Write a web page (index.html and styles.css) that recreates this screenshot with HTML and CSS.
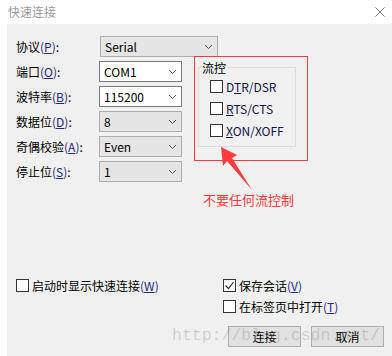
FILE: index.html
```html
<!DOCTYPE html>
<html lang="zh-CN">
<head>
    <meta charset="UTF-8">
    <meta name="viewport" content="width=device-width, initial-scale=1.0">
    <title>快速连接</title>
    <link rel="stylesheet" href="styles.css">
</head>
<body>
    <div class="window">
        <div class="titlebar">
            <span class="title">快速连接</span>
            <svg class="close" width="10" height="10" viewBox="0 0 10 10">
                <path d="M0.5 0.5 L9.5 9.5 M9.5 0.5 L0.5 9.5" stroke="#777" stroke-width="1" fill="none"/>
            </svg>
        </div>

        <div class="client">
            <div class="row">
                <span class="label">协议<span class="key">(<u>P</u>)</span>:</span>
                <div class="combo combo-wide is-locked">
                    <span>Serial</span>
                    <svg width="7" height="4" viewBox="0 0 7 4"><path d="M0 0 L3.5 3.5 L7 0" stroke="#555" fill="none"/></svg>
                </div>
            </div>

            <div class="settings">
                <div class="fields">
                    <div class="row">
                        <span class="label">端口<span class="key">(<u>O</u>)</span>:</span>
                        <div class="combo">
                            <span>COM1</span>
                            <svg width="7" height="4" viewBox="0 0 7 4"><path d="M0 0 L3.5 3.5 L7 0" stroke="#555" fill="none"/></svg>
                        </div>
                    </div>
                    <div class="row">
                        <span class="label">波特率<span class="key">(<u>B</u>)</span>:</span>
                        <div class="combo">
                            <span>115200</span>
                            <svg width="7" height="4" viewBox="0 0 7 4"><path d="M0 0 L3.5 3.5 L7 0" stroke="#555" fill="none"/></svg>
                        </div>
                    </div>
                    <div class="row">
                        <span class="label">数据位<span class="key">(<u>D</u>)</span>:</span>
                        <div class="combo is-locked">
                            <span>8</span>
                            <svg width="7" height="4" viewBox="0 0 7 4"><path d="M0 0 L3.5 3.5 L7 0" stroke="#555" fill="none"/></svg>
                        </div>
                    </div>
                    <div class="row">
                        <span class="label">奇偶校验<span class="key">(<u>A</u>)</span>:</span>
                        <div class="combo is-locked">
                            <span>Even</span>
                            <svg width="7" height="4" viewBox="0 0 7 4"><path d="M0 0 L3.5 3.5 L7 0" stroke="#555" fill="none"/></svg>
                        </div>
                    </div>
                    <div class="row">
                        <span class="label">停止位<span class="key">(<u>S</u>)</span>:</span>
                        <div class="combo is-locked">
                            <span>1</span>
                            <svg width="7" height="4" viewBox="0 0 7 4"><path d="M0 0 L3.5 3.5 L7 0" stroke="#555" fill="none"/></svg>
                        </div>
                    </div>
                </div>

                <fieldset class="flow">
                    <legend>流控</legend>
                    <div class="check"><span class="box"></span><span class="check-text">D<u>T</u>R/DSR</span></div>
                    <div class="check"><span class="box"></span><span class="check-text"><u>R</u>TS/CTS</span></div>
                    <div class="check"><span class="box"></span><span class="check-text"><u>X</u>ON/XOFF</span></div>
                </fieldset>
            </div>

            <div class="footer">
                <div class="check check-tall">
                    <span class="box"></span>
                    <span>启动时显示快速连接<span class="key">(<u>W</u>)</span></span>
                </div>
                <div class="footer-opts">
                    <div class="check check-tall">
                        <span class="box">
                            <svg width="11" height="11" viewBox="0 0 11 11"><path d="M1.5 5.5 L4.5 8.5 L9.5 2" stroke="#333" stroke-width="1.2" fill="none"/></svg>
                        </span>
                        <span>保存会话<span class="key">(<u>V</u>)</span></span>
                    </div>
                    <div class="check check-tall">
                        <span class="box"></span>
                        <span>在标签页中打开<span class="key">(<u>T</u>)</span></span>
                    </div>
                </div>
            </div>

            <div class="actions">
                <button>连接</button>
                <button>取消</button>
            </div>

            <!-- annotation drawn on top of the screenshot -->
            <div class="mark-box"></div>
            <svg class="mark-arrow" width="40" height="50" viewBox="0 0 40 50">
                <polygon points="2,3 18,11 13,14 33,46 8,17 4,22" fill="#ff3b3b"/>
            </svg>
            <div class="mark-text">不要任何流控制</div>
            <div class="watermark">http://blog.csdn.net/</div>
        </div>
    </div>
</body>
</html>
```

FILE: styles.css
```css
body {
    margin: 0;
    background-color: #fff;
    font-family: "Noto Sans CJK SC", "Microsoft YaHei", sans-serif;
    font-size: 12px;
    color: #000;
}
.window {
    width: 392px;
    height: 356px;
    display: flex;
    flex-direction: column;
    overflow: hidden;
}
.titlebar {
    height: 24px;
    flex-shrink: 0;
    display: flex;
    align-items: center;
    justify-content: space-between;
    padding: 0 7px 0 8px;
    background-color: #fff;
}
.title {
    color: #9a9a9a;
    line-height: 14px;
}
.client {
    flex: 1;
    margin-left: 7px;
    padding: 12px 8px 9px 9px;
    background-color: #f0f0f0;
    display: flex;
    flex-direction: column;
    position: relative;
}
.row {
    display: flex;
    align-items: center;
    height: 21px;
}
.label {
    width: 83px;
    flex-shrink: 0;
    line-height: 16px;
}
.key {
    color: #25257a;
}
.combo {
    box-sizing: border-box;
    width: 83px;
    height: 21px;
    display: flex;
    align-items: center;
    justify-content: space-between;
    padding: 0 5px 0 4px;
    background-color: #fff;
    border: 1px solid #7a7a7a;
    line-height: 16px;
}
.combo.is-locked {
    background-color: #e5e5e5;
    border-color: #adadad;
}
.combo-wide {
    width: 118px;
    margin-left: 1px;
}
.settings {
    display: flex;
    align-items: flex-start;
    margin-top: 4px;
}
.fields {
    display: flex;
    flex-direction: column;
    gap: 4px;
}
.flow {
    box-sizing: border-box;
    width: 98px;
    margin: 0 0 0 16px;
    padding: 6px 0 9px 2px;
    border: 1px solid #dcdcdc;
    display: flex;
    flex-direction: column;
    gap: 9px;
    min-width: 0;
}
.flow legend {
    padding: 0 1px;
    line-height: 13px;
}
.flow .check {
    margin-left: 9px;
    height: 13px;
}
.check {
    display: flex;
    align-items: center;
    gap: 3px;
    line-height: 16px;
}
.check-text {
    color: #10104a;
}
.check-tall {
    height: 17px;
}
.box {
    box-sizing: border-box;
    width: 13px;
    height: 13px;
    flex-shrink: 0;
    border: 1px solid #333;
    background-color: #fff;
    display: flex;
    align-items: center;
    justify-content: center;
}
.footer {
    margin-top: auto;
    display: grid;
    grid-template-columns: 207px 1fr;
    align-items: start;
}
.footer-opts {
    display: flex;
    flex-direction: column;
    gap: 4px;
}
.actions {
    display: flex;
    justify-content: flex-end;
    gap: 10px;
    margin-top: 11px;
}
.actions button {
    width: 73px;
    height: 21px;
    padding: 0;
    background-color: #e1e1e1;
    border: 1px solid #adadad;
    border-radius: 0;
    font-family: inherit;
    font-size: 12px;
    color: #000;
}
.mark-box {
    position: absolute;
    left: 187px;
    top: 32px;
    width: 114px;
    height: 105px;
    box-sizing: border-box;
    border: 1px solid #ff3b3b;
}
.mark-arrow {
    position: absolute;
    left: 212px;
    top: 120px;
}
.mark-text {
    position: absolute;
    left: 196px;
    top: 168px;
    font-size: 13px;
    line-height: 16px;
    color: #ff3b3b;
    white-space: nowrap;
}
.watermark {
    position: absolute;
    left: 165px;
    top: 303px;
    font-family: "Liberation Mono", monospace;
    font-size: 16.5px;
    line-height: 17px;
    color: rgba(110, 110, 110, 0.25);
    white-space: nowrap;
    pointer-events: none;
}
```
